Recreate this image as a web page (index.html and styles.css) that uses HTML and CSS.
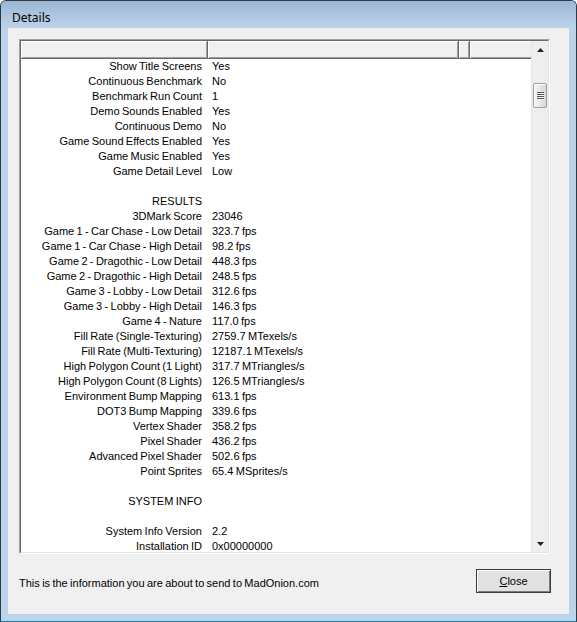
FILE: index.html
```html
<!DOCTYPE html>
<html>
<head>
<meta charset="utf-8">
<link rel="stylesheet" href="styles.css">
</head>
<body>
<div class="window">
  <div class="titlebar">Details</div>
  <div class="client">
    <div class="list">
      <div class="list-inner">
        <div class="main">
          <div class="header">
            <div class="hcell c1"></div>
            <div class="hcell c2"></div>
            <div class="hcell c3"></div>
            <div class="hcell c4"></div>
          </div>
          <div class="rows">
            <div class="row"><span class="k">Show Title Screens</span><span class="v">Yes</span></div>
            <div class="row"><span class="k">Continuous Benchmark</span><span class="v">No</span></div>
            <div class="row"><span class="k">Benchmark Run Count</span><span class="v">1</span></div>
            <div class="row"><span class="k">Demo Sounds Enabled</span><span class="v">Yes</span></div>
            <div class="row"><span class="k">Continuous Demo</span><span class="v">No</span></div>
            <div class="row"><span class="k">Game Sound Effects Enabled</span><span class="v">Yes</span></div>
            <div class="row"><span class="k">Game Music Enabled</span><span class="v">Yes</span></div>
            <div class="row"><span class="k">Game Detail Level</span><span class="v">Low</span></div>
            <div class="row"><span class="k"></span><span class="v"></span></div>
            <div class="row"><span class="k">RESULTS</span><span class="v"></span></div>
            <div class="row"><span class="k">3DMark Score</span><span class="v">23046</span></div>
            <div class="row"><span class="k">Game 1 - Car Chase - Low Detail</span><span class="v">323.7 fps</span></div>
            <div class="row"><span class="k">Game 1 - Car Chase - High Detail</span><span class="v">98.2 fps</span></div>
            <div class="row"><span class="k">Game 2 - Dragothic - Low Detail</span><span class="v">448.3 fps</span></div>
            <div class="row"><span class="k">Game 2 - Dragothic - High Detail</span><span class="v">248.5 fps</span></div>
            <div class="row"><span class="k">Game 3 - Lobby - Low Detail</span><span class="v">312.6 fps</span></div>
            <div class="row"><span class="k">Game 3 - Lobby - High Detail</span><span class="v">146.3 fps</span></div>
            <div class="row"><span class="k">Game 4 - Nature</span><span class="v">117.0 fps</span></div>
            <div class="row"><span class="k">Fill Rate (Single-Texturing)</span><span class="v">2759.7 MTexels/s</span></div>
            <div class="row"><span class="k">Fill Rate (Multi-Texturing)</span><span class="v">12187.1 MTexels/s</span></div>
            <div class="row"><span class="k">High Polygon Count (1 Light)</span><span class="v">317.7 MTriangles/s</span></div>
            <div class="row"><span class="k">High Polygon Count (8 Lights)</span><span class="v">126.5 MTriangles/s</span></div>
            <div class="row"><span class="k">Environment Bump Mapping</span><span class="v">613.1 fps</span></div>
            <div class="row"><span class="k">DOT3 Bump Mapping</span><span class="v">339.6 fps</span></div>
            <div class="row"><span class="k">Vertex Shader</span><span class="v">358.2 fps</span></div>
            <div class="row"><span class="k">Pixel Shader</span><span class="v">436.2 fps</span></div>
            <div class="row"><span class="k">Advanced Pixel Shader</span><span class="v">502.6 fps</span></div>
            <div class="row"><span class="k">Point Sprites</span><span class="v">65.4 MSprites/s</span></div>
            <div class="row"><span class="k"></span><span class="v"></span></div>
            <div class="row"><span class="k">SYSTEM INFO</span><span class="v"></span></div>
            <div class="row"><span class="k"></span><span class="v"></span></div>
            <div class="row"><span class="k">System Info Version</span><span class="v">2.2</span></div>
            <div class="row"><span class="k">Installation ID</span><span class="v">0x00000000</span></div>
          </div>
        </div>
        <div class="vscroll">
          <div class="sbtn">
            <svg width="7" height="4" viewBox="0 0 7 4"><path d="M3.5 0 L7 4 L0 4 Z" fill="#202020"/></svg>
          </div>
          <div class="track">
            <div class="thumb">
              <span class="grip"></span><span class="grip"></span><span class="grip"></span><span class="grip"></span>
            </div>
          </div>
          <div class="sbtn">
            <svg width="7" height="4" viewBox="0 0 7 4"><path d="M0 0 L7 0 L3.5 4 Z" fill="#202020"/></svg>
          </div>
        </div>
      </div>
    </div>
    <div class="footer">
      <span class="note">This is the information you are about to send to MadOnion.com</span>
      <button class="btn"><u>C</u>lose</button>
    </div>
  </div>
</div>
</body>
</html>
```
FILE: styles.css
```css
* { box-sizing: border-box; }
body {
  margin: 0;
  background: #ffffff;
  font-family: "Liberation Sans", Arial, sans-serif;
  font-size: 11px;
  word-spacing: -0.7px;
  color: #000;
}
.window {
  width: 577px;
  height: 622px;
  border: 1px solid #2c3a44;
  border-bottom-color: #1a7f9a;
  border-radius: 6px 6px 0 0;
  background: #bcd3ea;
  display: flex;
  flex-direction: column;
  overflow: hidden;
}
.titlebar {
  height: 27px;
  flex: none;
  padding: 9px 0 0 11px;
  font-family: "Noto Sans", sans-serif;
  font-size: 12px;
  line-height: 15px;
  word-spacing: 0;
  color: #000;
  background: linear-gradient(#9cb6d4, #bcd3ea);
}
.client {
  flex: 1;
  margin: 0 7px 7px;
  background: #f0f0f0;
  padding: 11px 19px 0 11px;
  display: flex;
  flex-direction: column;
}
.list {
  height: 515px;
  flex: none;
  border: 1px solid;
  border-color: #a0a0a0 #ffffff #ffffff #a0a0a0;
}
.list-inner {
  height: 100%;
  border: 1px solid;
  border-color: #696969 #e3e3e3 #e3e3e3 #696969;
  display: flex;
  background: #fff;
}
.main {
  flex: 1;
  overflow: hidden;
  display: flex;
  flex-direction: column;
}
.header {
  display: flex;
  height: 18px;
  flex: none;
}
.hcell {
  height: 18px;
  background: #f0f0f0;
  border-right: 1px solid #696969;
  border-bottom: 1px solid #696969;
  box-shadow: inset 1px 1px #ffffff, inset -1px -1px #a0a0a0;
}
.c1 { width: 187px; }
.c2 { width: 251px; }
.c3 { width: 11px; }
.c4 { flex: 1; border-right: none; box-shadow: inset 1px 1px #ffffff, inset 0 -1px #a0a0a0; }
.rows { display: flex; flex-direction: column; }
.row {
  display: grid;
  grid-template-columns: 187px 1fr;
  height: 15px;
  line-height: 15px;
  white-space: nowrap;
}
.k { text-align: right; padding-right: 6px; }
.v { padding-left: 4px; }
.vscroll {
  width: 17px;
  flex: none;
  display: flex;
  flex-direction: column;
  background: #eeeeee;
  border-left: 1px solid #e6e6e6;
}
.sbtn {
  height: 17px;
  flex: none;
  display: flex;
  align-items: center;
  justify-content: center;
  padding-left: 1px;
}
.track { flex: 1; display: flex; flex-direction: column; align-items: center; }
.thumb {
  margin-top: 25px;
  width: 14px;
  height: 25px;
  border: 1px solid #9c9c9c;
  border-radius: 2px;
  background: linear-gradient(90deg, #f4f4f4, #e6e6e6 50%, #d8d8d8);
  box-shadow: inset 1px 1px #ffffff;
  display: flex;
  flex-direction: column;
  align-items: center;
  justify-content: center;
  gap: 1px;
}
.grip {
  width: 7px;
  height: 1px;
  background: #555;
  box-shadow: 0 1px #f8f8f8;
}
.footer {
  display: flex;
  align-items: center;
  justify-content: space-between;
  margin-top: 15px;
}
.note { padding-top: 3px; }
.btn {
  width: 75px;
  height: 24px;
  margin-right: -1px;
  font-family: "Liberation Sans", Arial, sans-serif;
  font-size: 11px;
  color: #000;
  background: #e1e1e1;
  border: 1px solid #3c3c3c;
  box-shadow: inset 1px 1px #ffffff, inset -1px -1px #7a7a7a;
  padding: 0;
}
```
